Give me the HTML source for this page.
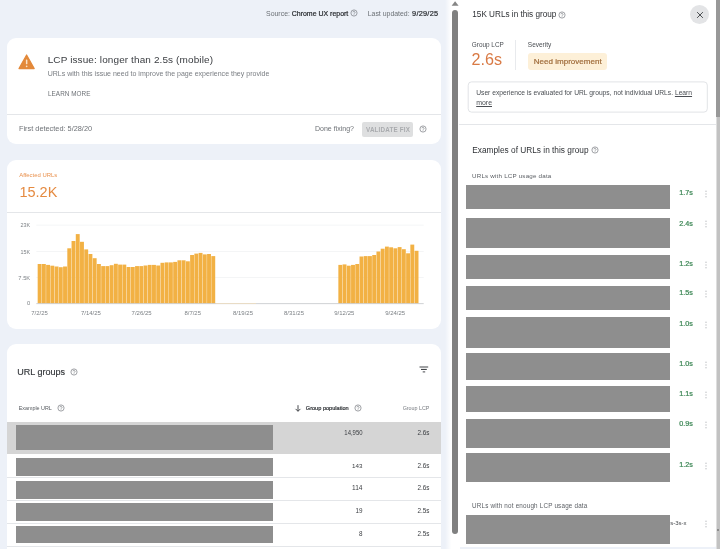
<!DOCTYPE html>
<html lang="en"><head><meta charset="utf-8"><title>Core Web Vitals - LCP issue</title>
<style>
html,body{margin:0;padding:0}
body{width:720px;height:549px;overflow:hidden;position:relative;background:#edf1f8;font-family:"Liberation Sans",Arial,sans-serif;}
.abs{position:absolute}
.t{position:absolute;white-space:nowrap;line-height:12px;height:12px}
.t b{font-weight:400;color:#2a2d31;-webkit-text-stroke:.22px #2a2d31}
.card{position:absolute;background:#fff;border-radius:9px}
.gb{position:absolute;background:#8e8e8e}
.hl{position:absolute;height:0.8px;background:#e4e6e9}
</style></head><body>
<!-- left page -->
<div class="card" style="left:7px;top:38px;width:433.6px;height:106px"></div>
<div class="hl" style="left:7px;top:113.9px;width:433.6px"></div>
<div class="card" style="left:7px;top:159.6px;width:433.6px;height:169.6px"></div>
<div class="hl" style="left:7px;top:212.1px;width:433.6px"></div>
<div class="card" style="left:7px;top:344px;width:433.6px;height:230px"></div>
<!-- warning icon -->
<svg class="abs" style="left:16px;top:52px" width="22" height="20" viewBox="0 0 22 20"><path d="M10.6 3 L18.2 16.6 H3 Z" fill="#e3893a" stroke="#e3893a" stroke-width="1.2" stroke-linejoin="round"/><rect x="9.9" y="7.6" width="1.5" height="4.6" rx=".4" fill="#fbe3c8"/><circle cx="10.65" cy="14.3" r=".85" fill="#fbe3c8"/></svg>
<!-- validate button -->
<div class="abs" style="left:361.7px;top:121.7px;width:51.7px;height:15.6px;background:#dedfe0;border-radius:2px"></div>
<!-- table -->
<div class="abs" style="left:7px;top:421.9px;width:433.6px;height:31.8px;background:#d5d5d5"></div>
<div class="gb" style="left:16px;top:424.8px;width:257px;height:25.5px"></div><div class="gb" style="left:16px;top:458.3px;width:257px;height:17.7px"></div><div class="gb" style="left:16px;top:480.5px;width:257px;height:18.1px"></div><div class="gb" style="left:16px;top:503.3px;width:257px;height:17.7px"></div><div class="gb" style="left:16px;top:525.6px;width:257px;height:17.7px"></div>
<div class="hl" style="left:7px;top:477.3px;width:433.5px"></div><div class="hl" style="left:7px;top:500.1px;width:433.5px"></div><div class="hl" style="left:7px;top:522.8px;width:433.5px"></div><div class="hl" style="left:7px;top:545.6px;width:433.5px"></div>
<!-- filter icon -->
<svg class="abs" style="left:418px;top:364px" width="12" height="10" viewBox="0 0 12 10"><g fill="#44474b"><rect x="1.5" y="2.5" width="8.7" height="1"/><rect x="3" y="4.9" width="5.8" height="1.1"/><rect x="4.7" y="7.4" width="2.5" height="1"/></g></svg>
<!-- sort arrow -->
<svg class="abs" style="left:294px;top:403.5px" width="8" height="9" viewBox="0 0 8 9"><path d="M4 1.2 V7.2 M1.6 4.9 L4 7.3 L6.4 4.9" fill="none" stroke="#33363a" stroke-width="0.9"/></svg>
<svg class="abs" style="left:0;top:0" width="460" height="549" viewBox="0 0 460 549">
<rect x="36.3" y="224.75" width="387.4" height="0.7" fill="#f0f1f3"/><rect x="36.3" y="251.15" width="387.4" height="0.7" fill="#f0f1f3"/><rect x="36.3" y="277.25" width="387.4" height="0.7" fill="#f0f1f3"/>
<g fill="#f2b144"><rect x="37.67" y="264.0" width="3.9" height="39.4"/><rect x="41.91" y="264.0" width="3.9" height="39.4"/><rect x="46.14" y="264.9" width="3.9" height="38.5"/><rect x="50.38" y="265.7" width="3.9" height="37.7"/><rect x="54.61" y="266.5" width="3.9" height="36.9"/><rect x="58.84" y="267.2" width="3.9" height="36.2"/><rect x="63.08" y="266.5" width="3.9" height="36.9"/><rect x="67.32" y="248.3" width="3.9" height="55.1"/><rect x="71.55" y="241.0" width="3.9" height="62.4"/><rect x="75.79" y="234.1" width="3.9" height="69.3"/><rect x="80.02" y="241.8" width="3.9" height="61.6"/><rect x="84.26" y="249.4" width="3.9" height="54.0"/><rect x="88.49" y="254.0" width="3.9" height="49.4"/><rect x="92.73" y="258.2" width="3.9" height="45.2"/><rect x="96.96" y="264.0" width="3.9" height="39.4"/><rect x="101.20" y="266.1" width="3.9" height="37.3"/><rect x="105.43" y="266.1" width="3.9" height="37.3"/><rect x="109.67" y="265.2" width="3.9" height="38.2"/><rect x="113.90" y="263.8" width="3.9" height="39.6"/><rect x="118.14" y="264.6" width="3.9" height="38.8"/><rect x="122.37" y="264.6" width="3.9" height="38.8"/><rect x="126.61" y="267.0" width="3.9" height="36.4"/><rect x="130.84" y="267.0" width="3.9" height="36.4"/><rect x="135.07" y="266.1" width="3.9" height="37.3"/><rect x="139.31" y="266.1" width="3.9" height="37.3"/><rect x="143.54" y="265.5" width="3.9" height="37.9"/><rect x="147.78" y="264.9" width="3.9" height="38.5"/><rect x="152.02" y="264.9" width="3.9" height="38.5"/><rect x="156.25" y="265.5" width="3.9" height="37.9"/><rect x="160.48" y="262.8" width="3.9" height="40.6"/><rect x="164.72" y="262.4" width="3.9" height="41.0"/><rect x="168.95" y="262.4" width="3.9" height="41.0"/><rect x="173.19" y="261.9" width="3.9" height="41.5"/><rect x="177.43" y="260.3" width="3.9" height="43.1"/><rect x="181.66" y="260.3" width="3.9" height="43.1"/><rect x="185.90" y="261.3" width="3.9" height="42.1"/><rect x="190.13" y="255.0" width="3.9" height="48.4"/><rect x="194.37" y="253.6" width="3.9" height="49.8"/><rect x="198.60" y="252.9" width="3.9" height="50.5"/><rect x="202.84" y="254.4" width="3.9" height="49.0"/><rect x="207.07" y="254.0" width="3.9" height="49.4"/><rect x="211.31" y="256.1" width="3.9" height="47.3"/><rect x="338.36" y="264.9" width="3.9" height="38.5"/><rect x="342.59" y="264.4" width="3.9" height="39.0"/><rect x="346.83" y="265.7" width="3.9" height="37.7"/><rect x="351.06" y="264.9" width="3.9" height="38.5"/><rect x="355.30" y="264.0" width="3.9" height="39.4"/><rect x="359.53" y="256.5" width="3.9" height="46.9"/><rect x="363.77" y="256.1" width="3.9" height="47.3"/><rect x="368.00" y="256.1" width="3.9" height="47.3"/><rect x="372.24" y="255.0" width="3.9" height="48.4"/><rect x="376.47" y="251.5" width="3.9" height="51.9"/><rect x="380.71" y="248.7" width="3.9" height="54.7"/><rect x="384.94" y="246.6" width="3.9" height="56.8"/><rect x="389.18" y="247.3" width="3.9" height="56.1"/><rect x="393.41" y="248.3" width="3.9" height="55.1"/><rect x="397.65" y="247.1" width="3.9" height="56.3"/><rect x="401.88" y="249.2" width="3.9" height="54.2"/><rect x="406.12" y="253.3" width="3.9" height="50.1"/><rect x="410.35" y="244.6" width="3.9" height="58.8"/><rect x="414.59" y="250.8" width="3.9" height="52.6"/></g>
<rect x="36.3" y="303.3" width="387.4" height="0.8" fill="#c4c6c9"/>
<rect x="216" y="303.1" width="40" height="0.6" fill="#f6dfb8"/>
</svg>
<!-- page scrollbar -->
<div class="abs" style="left:445px;top:0;width:15px;height:549px;background:linear-gradient(90deg,rgba(255,255,255,0) 0%,#fff 42%,#fff 100%)"></div>
<svg class="abs" style="left:450px;top:0" width="10" height="10" viewBox="0 0 10 10"><path d="M1.6 5.8 L5.1 1.3 L8.6 5.8 Z" fill="#858585"/></svg>
<div class="abs" style="left:452.2px;top:10px;width:5.9px;height:524.3px;background:#808080;border-radius:3px"></div>
<!-- side panel -->
<div class="abs" style="left:459.3px;top:0;width:260.7px;height:546.5px;background:#fff;border-radius:0 0 6px 0"></div>
<div class="abs" style="left:689.9px;top:4.9px;width:19.2px;height:19.2px;border-radius:50%;background:#e3e4e6"></div>
<svg class="abs" style="left:694.5px;top:9.5px" width="10" height="10" viewBox="0 0 10 10"><path d="M2.1 2.1 L7.9 7.9 M7.9 2.1 L2.1 7.9" stroke="#3c4043" stroke-width="0.9" fill="none"/></svg>
<div class="abs" style="left:515.3px;top:40px;width:0.8px;height:30.4px;background:#e8eaed"></div>
<div class="abs" style="left:527.8px;top:53.4px;width:79.6px;height:16.2px;background:#fdf0d8;border-radius:3px"></div>
<svg class="abs" style="left:460px;top:75px" width="256" height="45" viewBox="460 75 256 45"><rect x="468.2" y="81.9" width="239.1" height="30.2" rx="3.3" fill="none" stroke="#dcdee1" stroke-width="0.85"/></svg>
<div class="hl" style="left:459.3px;top:124px;width:256.5px"></div>
<div class="gb" style="left:466px;top:184.5px;width:204.3px;height:24.1px"></div><div class="gb" style="left:466px;top:218.3px;width:204.3px;height:29.6px"></div><div class="gb" style="left:466px;top:255.3px;width:204.3px;height:23.8px"></div><div class="gb" style="left:466px;top:286px;width:204.3px;height:23.8px"></div><div class="gb" style="left:466px;top:317.1px;width:204.3px;height:30.6px"></div><div class="gb" style="left:466px;top:353.3px;width:204.3px;height:26.5px"></div><div class="gb" style="left:466px;top:385.8px;width:204.3px;height:25.8px"></div><div class="gb" style="left:466px;top:419.2px;width:204.3px;height:28.9px"></div><div class="gb" style="left:466px;top:452.8px;width:204.3px;height:29.0px"></div><div class="gb" style="left:466px;top:515px;width:204.3px;height:28.9px"></div>
<!-- panel scrollbar -->
<div class="abs" style="left:715.8px;top:0;width:4.2px;height:549px;background:linear-gradient(90deg,#dedede 0,#dedede 0.9px,#c2c2c2 0.9px)"></div>
<div class="abs" style="left:716.4px;top:0;width:3.6px;height:117px;background:#989898"></div>
<div class="abs" style="left:717px;top:529px;width:2.4px;height:2.4px;background:#8c8c8c"></div>
<svg class="abs" style="left:349.2px;top:8.3px" width="10" height="10" viewBox="-5 -5 10 10"><circle r="3.1" fill="none" stroke="#6f7378" stroke-width="0.65"/><path d="M-1 -0.7 a1 1 0 1 1 1.6 0.8 q-0.6 0.4 -0.6 0.9" fill="none" stroke="#6f7378" stroke-width="0.6"/><circle cx="0" cy="1.75" r="0.38" fill="#6f7378"/></svg><svg class="abs" style="left:418.3px;top:124.4px" width="10" height="10" viewBox="-5 -5 10 10"><circle r="3.1" fill="none" stroke="#6f7378" stroke-width="0.65"/><path d="M-1 -0.7 a1 1 0 1 1 1.6 0.8 q-0.6 0.4 -0.6 0.9" fill="none" stroke="#6f7378" stroke-width="0.6"/><circle cx="0" cy="1.75" r="0.38" fill="#6f7378"/></svg><svg class="abs" style="left:68.8px;top:366.8px" width="10" height="10" viewBox="-5 -5 10 10"><circle r="3.1" fill="none" stroke="#6f7378" stroke-width="0.65"/><path d="M-1 -0.7 a1 1 0 1 1 1.6 0.8 q-0.6 0.4 -0.6 0.9" fill="none" stroke="#6f7378" stroke-width="0.6"/><circle cx="0" cy="1.75" r="0.38" fill="#6f7378"/></svg><svg class="abs" style="left:56.4px;top:402.9px" width="10" height="10" viewBox="-5 -5 10 10"><circle r="3.1" fill="none" stroke="#6f7378" stroke-width="0.65"/><path d="M-1 -0.7 a1 1 0 1 1 1.6 0.8 q-0.6 0.4 -0.6 0.9" fill="none" stroke="#6f7378" stroke-width="0.6"/><circle cx="0" cy="1.75" r="0.38" fill="#6f7378"/></svg><svg class="abs" style="left:353.4px;top:402.9px" width="10" height="10" viewBox="-5 -5 10 10"><circle r="3.1" fill="none" stroke="#6f7378" stroke-width="0.65"/><path d="M-1 -0.7 a1 1 0 1 1 1.6 0.8 q-0.6 0.4 -0.6 0.9" fill="none" stroke="#6f7378" stroke-width="0.6"/><circle cx="0" cy="1.75" r="0.38" fill="#6f7378"/></svg><svg class="abs" style="left:556.6px;top:9.9px" width="10" height="10" viewBox="-5 -5 10 10"><circle r="3.1" fill="none" stroke="#6f7378" stroke-width="0.65"/><path d="M-1 -0.7 a1 1 0 1 1 1.6 0.8 q-0.6 0.4 -0.6 0.9" fill="none" stroke="#6f7378" stroke-width="0.6"/><circle cx="0" cy="1.75" r="0.38" fill="#6f7378"/></svg><svg class="abs" style="left:589.5px;top:144.9px" width="10" height="10" viewBox="-5 -5 10 10"><circle r="3.1" fill="none" stroke="#6f7378" stroke-width="0.65"/><path d="M-1 -0.7 a1 1 0 1 1 1.6 0.8 q-0.6 0.4 -0.6 0.9" fill="none" stroke="#6f7378" stroke-width="0.6"/><circle cx="0" cy="1.75" r="0.38" fill="#6f7378"/></svg><svg class="abs" style="left:702.8px;top:187.7px" width="6" height="12" viewBox="-3 -6 6 12"><g fill="#bcbfc3"><circle cy="-2.8" r="0.7"/><circle cy="0" r="0.7"/><circle cy="2.8" r="0.7"/></g></svg><svg class="abs" style="left:702.8px;top:218.0px" width="6" height="12" viewBox="-3 -6 6 12"><g fill="#bcbfc3"><circle cy="-2.8" r="0.7"/><circle cy="0" r="0.7"/><circle cy="2.8" r="0.7"/></g></svg><svg class="abs" style="left:702.8px;top:258.8px" width="6" height="12" viewBox="-3 -6 6 12"><g fill="#bcbfc3"><circle cy="-2.8" r="0.7"/><circle cy="0" r="0.7"/><circle cy="2.8" r="0.7"/></g></svg><svg class="abs" style="left:702.8px;top:288.4px" width="6" height="12" viewBox="-3 -6 6 12"><g fill="#bcbfc3"><circle cy="-2.8" r="0.7"/><circle cy="0" r="0.7"/><circle cy="2.8" r="0.7"/></g></svg><svg class="abs" style="left:702.8px;top:318.7px" width="6" height="12" viewBox="-3 -6 6 12"><g fill="#bcbfc3"><circle cy="-2.8" r="0.7"/><circle cy="0" r="0.7"/><circle cy="2.8" r="0.7"/></g></svg><svg class="abs" style="left:702.8px;top:358.7px" width="6" height="12" viewBox="-3 -6 6 12"><g fill="#bcbfc3"><circle cy="-2.8" r="0.7"/><circle cy="0" r="0.7"/><circle cy="2.8" r="0.7"/></g></svg><svg class="abs" style="left:702.8px;top:388.7px" width="6" height="12" viewBox="-3 -6 6 12"><g fill="#bcbfc3"><circle cy="-2.8" r="0.7"/><circle cy="0" r="0.7"/><circle cy="2.8" r="0.7"/></g></svg><svg class="abs" style="left:702.8px;top:419.0px" width="6" height="12" viewBox="-3 -6 6 12"><g fill="#bcbfc3"><circle cy="-2.8" r="0.7"/><circle cy="0" r="0.7"/><circle cy="2.8" r="0.7"/></g></svg><svg class="abs" style="left:702.8px;top:459.5px" width="6" height="12" viewBox="-3 -6 6 12"><g fill="#bcbfc3"><circle cy="-2.8" r="0.7"/><circle cy="0" r="0.7"/><circle cy="2.8" r="0.7"/></g></svg><svg class="abs" style="left:702.8px;top:517.5px" width="6" height="12" viewBox="-3 -6 6 12"><g fill="#bcbfc3"><circle cy="-2.8" r="0.7"/><circle cy="0" r="0.7"/><circle cy="2.8" r="0.7"/></g></svg>
<div class="abs" style="left:0;top:0;width:720px;height:549px;will-change:transform">
<div class="t" id="src" style="left:266px;top:7.5px;font-size:6.96px;color:#6b7075;font-weight:400;">Source:</div>
<div class="t" id="src2" style="right:371.7px;top:7.5px;font-size:6.98px;color:#2a2d31;font-weight:400;"><b>Chrome UX report</b></div>
<div class="t" id="upd" style="left:367.7px;top:7.5px;font-size:6.93px;color:#6b7075;font-weight:400;">Last updated:</div>
<div class="t" id="upd2" style="right:281.7px;top:7.5px;font-size:7.33px;color:#2a2d31;font-weight:400;letter-spacing:.25px;"><b>9/29/25</b></div>
<div class="t" id="title" style="left:47.7px;top:54.4px;font-size:9.97px;color:#3a3d41;font-weight:400;letter-spacing:.12px;">LCP issue: longer than 2.5s (mobile)</div>
<div class="t" id="sub" style="left:47.7px;top:68.0px;font-size:7.04px;color:#7a7e83;font-weight:400;">URLs with this issue need to improve the page experience they provide</div>
<div class="t" id="learn" style="left:47.7px;transform-origin:0 50%;transform:scaleX(0.9223);top:88.2px;font-size:6.9px;color:#6d7176;font-weight:400;letter-spacing:.05px;">LEARN MORE</div>
<div class="t" id="first" style="left:19px;top:123.2px;font-size:7.35px;color:#6d7176;font-weight:400;">First detected: 5/28/20</div>
<div class="t" id="done" style="left:315px;top:123.2px;font-size:7.02px;color:#6d7176;font-weight:400;">Done fixing?</div>
<div class="t" id="valid" style="left:387.5px;transform:translateX(-50%) scaleX(0.8596);top:123.5px;font-size:7.3px;color:#a9abae;font-weight:700;letter-spacing:.2px;">VALIDATE FIX</div>
<div class="t" id="aff" style="left:19.2px;top:168.8px;font-size:5.93px;color:#e9914d;font-weight:400;">Affected URLs</div>
<div class="t" id="big" style="left:19.5px;top:186.0px;font-size:14.47px;color:#e58a40;font-weight:400;">15.2K</div>
<div class="t" id="urlg" style="left:17.2px;top:365.6px;font-size:9.02px;color:#33363a;font-weight:400;-webkit-text-stroke:.15px #33363a;">URL groups</div>
<div class="t" id="exurl" style="left:18.7px;top:401.8px;font-size:5.38px;color:#55595e;font-weight:400;">Example URL</div>
<div class="t" id="gpop" style="left:305.8px;top:401.8px;font-size:5.6px;color:#33363a;font-weight:400;-webkit-text-stroke:.22px #33363a;">Group population</div>
<div class="t" id="glcp" style="right:290.6px;top:401.8px;font-size:5.35px;color:#777b80;font-weight:400;">Group LCP</div>
<div class="t" id="v1" style="right:357.6px;transform-origin:100% 50%;transform:scaleX(0.9311);top:426.5px;font-size:6.4px;color:#3a3d41;font-weight:400;">14,950</div>
<div class="t" id="v2" style="right:357.6px;top:459.6px;font-size:6.24px;color:#3a3d41;font-weight:400;">143</div>
<div class="t" id="v3" style="right:357.6px;top:482.2px;font-size:6.53px;color:#3a3d41;font-weight:400;">114</div>
<div class="t" id="v4" style="right:357.6px;top:505.0px;font-size:6.29px;color:#3a3d41;font-weight:400;">19</div>
<div class="t" id="v5" style="right:357.6px;top:527.8px;font-size:6.29px;color:#3a3d41;font-weight:400;">8</div>
<div class="t" id="l1" style="right:290.6px;top:426.5px;font-size:6.35px;color:#3a3d41;font-weight:400;">2.6s</div>
<div class="t" id="l2" style="right:290.6px;top:459.6px;font-size:6.35px;color:#3a3d41;font-weight:400;">2.6s</div>
<div class="t" id="l3" style="right:290.6px;top:482.2px;font-size:6.35px;color:#3a3d41;font-weight:400;">2.6s</div>
<div class="t" id="l4" style="right:290.6px;top:505.0px;font-size:6.35px;color:#3a3d41;font-weight:400;">2.5s</div>
<div class="t" id="l5" style="right:290.6px;top:527.8px;font-size:6.35px;color:#3a3d41;font-weight:400;">2.5s</div>
<div class="t" id="ptitle" style="left:472.3px;top:8.8px;font-size:8.18px;color:#2e3135;font-weight:400;">15K URLs in this group</div>
<div class="t" id="pglcp" style="left:471.8px;top:39.0px;font-size:6.4px;color:#4a4e53;font-weight:400;">Group LCP</div>
<div class="t" id="pbig" style="left:471.6px;top:52.8px;font-size:16.15px;color:#d97a45;font-weight:400;">2.6s</div>
<div class="t" id="psev" style="left:527.8px;top:39.0px;font-size:6.5px;color:#4a4e53;font-weight:400;">Severity</div>
<div class="t" id="pneed" style="left:533.8px;top:55.8px;font-size:8.04px;color:#a06d3c;font-weight:400;-webkit-text-stroke:.22px #a06d3c;">Need improvement</div>
<div class="t" id="pinfo1" style="left:476.2px;top:87.1px;font-size:6.71px;color:#4a4e53;font-weight:400;">User experience is evaluated for URL groups, not individual URLs. <u>Learn</u></div>
<div class="t" id="pinfo2" style="left:476.2px;top:96.6px;font-size:6.94px;color:#4a4e53;font-weight:400;"><u>more</u></div>
<div class="t" id="pex" style="left:472.3px;top:144.1px;font-size:8.31px;color:#2e3135;font-weight:400;">Examples of URLs in this group</div>
<div class="t" id="pwith" style="left:472px;top:170.2px;font-size:6.24px;color:#5a5e63;font-weight:400;letter-spacing:.2px;">URLs with LCP usage data</div>
<div class="t" id="pnot" style="left:472px;top:500.4px;font-size:6.29px;color:#5a5e63;font-weight:400;letter-spacing:.2px;">URLs with not enough LCP usage data</div>
<div class="t" id="p3s" style="left:670.3px;top:517.0px;font-size:5.99px;color:#44474b;font-weight:400;">s-3s-x</div>
<div class="t" id="g0" style="left:679.2px;top:186.7px;font-size:7.2px;color:#3a8553;font-weight:400;-webkit-text-stroke:.22px #3a8553;">1.7s</div>
<div class="t" id="g1" style="left:679.2px;top:217.8px;font-size:7.2px;color:#3a8553;font-weight:400;-webkit-text-stroke:.22px #3a8553;">2.4s</div>
<div class="t" id="g2" style="left:679.2px;top:257.8px;font-size:7.2px;color:#3a8553;font-weight:400;-webkit-text-stroke:.22px #3a8553;">1.2s</div>
<div class="t" id="g3" style="left:679.2px;top:287.4px;font-size:7.2px;color:#3a8553;font-weight:400;-webkit-text-stroke:.22px #3a8553;">1.5s</div>
<div class="t" id="g4" style="left:679.2px;top:317.7px;font-size:7.2px;color:#3a8553;font-weight:400;-webkit-text-stroke:.22px #3a8553;">1.0s</div>
<div class="t" id="g5" style="left:679.2px;top:357.7px;font-size:7.2px;color:#3a8553;font-weight:400;-webkit-text-stroke:.22px #3a8553;">1.0s</div>
<div class="t" id="g6" style="left:679.2px;top:387.7px;font-size:7.2px;color:#3a8553;font-weight:400;-webkit-text-stroke:.22px #3a8553;">1.1s</div>
<div class="t" id="g7" style="left:679.2px;top:418.0px;font-size:7.2px;color:#3a8553;font-weight:400;-webkit-text-stroke:.22px #3a8553;">0.9s</div>
<div class="t" id="g8" style="left:679.2px;top:458.5px;font-size:7.2px;color:#3a8553;font-weight:400;-webkit-text-stroke:.22px #3a8553;">1.2s</div>
<div class="t" id="y0" style="right:689.8px;top:219.1px;font-size:5.4px;color:#7c8085;font-weight:400;">23K</div>
<div class="t" id="y1" style="right:689.8px;top:245.5px;font-size:5.4px;color:#7c8085;font-weight:400;">15K</div>
<div class="t" id="y2" style="right:689.8px;top:271.6px;font-size:5.75px;color:#7c8085;font-weight:400;">7.5K</div>
<div class="t" id="y3" style="right:689.8px;top:297.4px;font-size:5.73px;color:#7c8085;font-weight:400;">0</div>
<div class="t" id="x0" style="left:39.5px;transform:translateX(-50%);top:306.8px;font-size:5.94px;color:#7c8085;font-weight:400;">7/2/25</div>
<div class="t" id="x1" style="left:90.9px;transform:translateX(-50%);top:306.8px;font-size:6.0px;color:#7c8085;font-weight:400;">7/14/25</div>
<div class="t" id="x2" style="left:141.6px;transform:translateX(-50%);top:306.8px;font-size:6.0px;color:#7c8085;font-weight:400;">7/26/25</div>
<div class="t" id="x3" style="left:192.7px;transform:translateX(-50%);top:306.8px;font-size:5.94px;color:#7c8085;font-weight:400;">8/7/25</div>
<div class="t" id="x4" style="left:243px;transform:translateX(-50%);top:306.8px;font-size:6.0px;color:#7c8085;font-weight:400;">8/19/25</div>
<div class="t" id="x5" style="left:294px;transform:translateX(-50%);top:306.8px;font-size:6.0px;color:#7c8085;font-weight:400;">8/31/25</div>
<div class="t" id="x6" style="left:344.3px;transform:translateX(-50%);top:306.8px;font-size:6.0px;color:#7c8085;font-weight:400;">9/12/25</div>
<div class="t" id="x7" style="left:395.2px;transform:translateX(-50%);top:306.8px;font-size:6.0px;color:#7c8085;font-weight:400;">9/24/25</div>
</div>
</body></html>
